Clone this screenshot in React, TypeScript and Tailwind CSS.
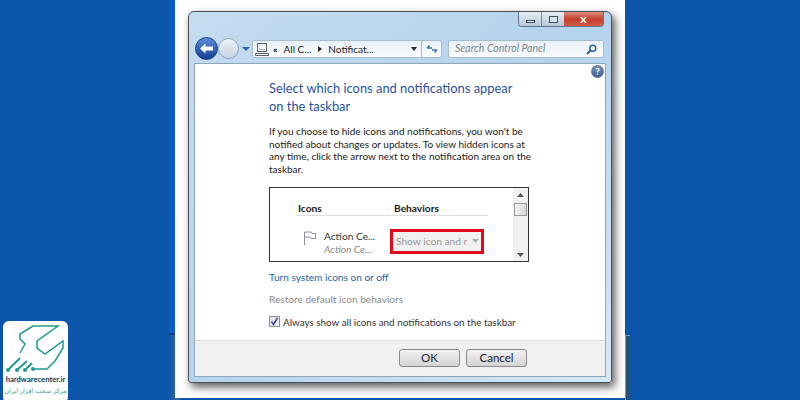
export default function App() {
  const font = { fontFamily: 'Lato, "Open Sans", sans-serif' };
  return (
    <div className="relative w-[800px] h-[400px] overflow-hidden bg-[#0b55ab] flex justify-center" style={font}>
      <div className="w-[462px] h-[400px] flex flex-col">
        <div className="h-[335px] bg-[#0a5cc4] w-[10px] border-b-2 border-[#0a3f80]" />
        <div className="flex-1 w-[10px] bg-gradient-to-r from-[#0b55ab] to-[#3a6e9c]" />
      </div>
      <div className="absolute left-[625px] top-[335px] w-[5px] h-[65px] bg-[#2a5070] border-l border-t border-[#7d97ad]" />
      <div className="absolute left-[175px] top-0 w-[450px] h-[398px] bg-white pt-[11px] pl-[13px]">
        <div className="w-[424px] h-[372px] rounded-t-[6px] rounded-b-[3px] border border-[#4a4f55] bg-gradient-to-br from-[#c5dcf0] via-[#b4d3ee] to-[#d6e8f6] shadow-[3px_4px_8px_rgba(0,0,0,0.65)] flex flex-col px-[5px] pb-[5px] relative">
          <div className="h-[51px] relative shrink-0">
            <div className="absolute right-[2px] top-0 flex h-[15px] rounded-b-[4px] border border-t-0 border-[#5f7488] overflow-hidden">
              <div className="w-[23px] bg-gradient-to-b from-[#e6eef6] to-[#b6c6d6] flex items-end justify-center pb-[3px] border-r border-[#7b8c9d]"><div className="w-[9px] h-[3px] bg-[#e8eef4] border border-[#44525f]" /></div>
              <div className="w-[22px] bg-gradient-to-b from-[#e6eef6] to-[#b6c6d6] flex items-center justify-center"><div className="w-[9px] h-[7px] border border-[#44525f] bg-[#d9e3ec]" /></div>
              <div className="w-[39px] bg-gradient-to-b from-[#dc8a7c] via-[#c4402c] to-[#cf5a45] flex items-center justify-center text-white text-[12px] font-bold leading-none">x</div>
            </div>
            <div className="absolute left-[1px] top-[25px] w-[23px] h-[23px] rounded-full border border-[#1b3f80] bg-gradient-to-b from-[#5e8ed8] to-[#113c94] flex items-center justify-center">
              <svg width="15" height="13" viewBox="0 0 15 13"><path d="M1 6.5 L6.5 1.5 V4.5 H14 V8.5 H6.5 V11.5 Z" fill="#fff" /></svg>
            </div>
            <div className="absolute left-[24px] top-[26px] w-[21px] h-[21px] rounded-full border border-[#8ca3ba] bg-gradient-to-b from-[#eef3f8] to-[#c6d5e3] flex items-center justify-center">
              <svg width="12" height="10" viewBox="0 0 15 13"><path d="M14 6.5 L8.5 1.5 V4.5 H1 V8.5 H8.5 V11.5 Z" fill="#d3dee8" /></svg>
            </div>
            <svg className="absolute left-[48px] top-[34px]" width="8" height="6" viewBox="0 0 8 6"><path d="M0 1 H8 L4 5 Z" fill="#2a66b0" /></svg>
            <div className="absolute left-[58px] top-[28px] w-[190px] h-[18px] bg-gradient-to-b from-[#e9f1f9] to-[#fafcfe] border border-[#a9bccc] rounded-[2px] flex items-center text-[10px] text-[#222] whitespace-nowrap">
              <svg className="ml-[2px] shrink-0" width="14" height="13" viewBox="0 0 14 13" fill="none" stroke="#56606a"><rect x="2.5" y="0.5" width="9" height="8" /><path d="M4 6.5 H10" stroke="#a0b8cc" /><path d="M0.5 10.5 H13.5 V12.5 H0.5 Z" /></svg>
              <span className="ml-[4px] text-[10px] font-bold leading-none">«</span>
              <span className="ml-[6px]">All C...</span>
              <svg className="ml-[7px] shrink-0" width="4" height="6" viewBox="0 0 4 6"><path d="M0 0 L4 3 L0 6 Z" fill="#222" /></svg>
              <span className="ml-[6px]">Notificat...</span>
              <svg className="ml-[37px] shrink-0" width="6" height="4" viewBox="0 0 6 4"><path d="M0 0 H6 L3 4 Z" fill="#222" /></svg>
              <div className="ml-auto w-[20px] h-full border-l border-[#a9bccc] flex items-center justify-center">
                <svg width="12" height="10" viewBox="0 0 12 10" fill="none" stroke="#3a6ea8" strokeWidth="1.4"><path d="M1 4 L3.5 1.5 M1 4 H6 M11 6 L8.5 8.5 M11 6 H6" /></svg>
              </div>
            </div>
            <div className="absolute left-[254px] top-[28px] w-[156px] h-[18px] bg-gradient-to-b from-[#e9f1f9] to-[#fafcfe] border border-[#a9bccc] rounded-[2px] flex items-center justify-between px-[6px] text-[10.5px] italic text-[#7c8791]">
              <span>Search Control Panel</span>
              <svg width="11" height="11" viewBox="0 0 11 11" fill="none" stroke="#2c66a8" strokeWidth="1.6"><circle cx="6.8" cy="4.2" r="3" /><path d="M4.6 6.4 L1 10" strokeWidth="2" /></svg>
            </div>
          </div>
          <div className="flex-1 bg-white border border-[#8fa5b8] flex flex-col">
            <div className="flex-1 relative pl-[74px] pt-[15px]">
              <div className="absolute right-[1px] top-[1px] w-[13px] h-[13px] rounded-full bg-gradient-to-b from-[#7e95b8] to-[#3a5c96] border border-[#5a7092] text-white text-[10px] font-bold leading-[11px] text-center">?</div>
              <div className="text-[12.9px] leading-[18px] text-[#2a52a0] w-[250px]">Select which icons and notifications appear on the taskbar</div>
              <div className="mt-[10px] text-[10px] leading-[12.7px] text-[#222] w-[266px]">If you choose to hide icons and notifications, you won't be notified about changes or updates. To view hidden icons at any time, click the arrow next to the notification area on the taskbar.</div>
              <div className="mt-[11px] w-[260px] h-[75px] border border-[#333] flex">
                <div className="flex-1 pl-[28px] pt-[14px]">
                  <div className="w-[190px] h-[14px] border-b border-[#ddd] flex text-[10.2px] font-bold leading-[12px] text-[#222]">
                    <span className="w-[96px]">Icons</span><span>Behaviors</span>
                  </div>
                  <div className="flex mt-[13px]">
                    <svg className="ml-[5px] mt-[2px] shrink-0" width="14" height="14" viewBox="0 0 14 14" fill="none" stroke="#8a9096"><path d="M1.5 14 V1 H8 L9 2.5 H13 L12 5 L13 7.5 H8 L7 6 H1.5" /></svg>
                    <div className="ml-[7px] pt-[1px] text-[10.2px] leading-[13px] text-[#333] w-[66px] whitespace-nowrap">Action Ce...<div className="italic text-[#888]">Action Ce...</div></div>
                    <div className="w-[94px] h-[25px] border-[3px] border-[#e00a1c] bg-[#f0f0f0] flex items-center pl-[3px] text-[10.2px] text-[#9a9a9a] whitespace-nowrap">
                      <span>Show icon and r</span>
                      <svg className="ml-[5px] shrink-0" width="7" height="4" viewBox="0 0 7 4"><path d="M0 0 H7 L3.5 4 Z" fill="#aaa" /></svg>
                    </div>
                  </div>
                </div>
                <div className="w-[15px] bg-[#f0f0f0] flex flex-col items-center pt-[5px] pb-[4px]">
                  <svg width="7" height="4" viewBox="0 0 7 4"><path d="M3.5 0 L7 4 H0 Z" fill="#555" /></svg>
                  <div className="mt-[6px] w-[13px] h-[13px] border border-[#999] bg-gradient-to-r from-[#f4f4f4] to-[#d8d8d8]" />
                  <svg className="mt-auto" width="7" height="4" viewBox="0 0 7 4"><path d="M0 0 H7 L3.5 4 Z" fill="#555" /></svg>
                </div>
              </div>
              <div className="mt-[8px] text-[10.1px] leading-[14px] text-[#1e63a8]">Turn system icons on or off</div>
              <div className="mt-[8px] text-[10.1px] leading-[14px] text-[#8c8c8c]">Restore default icon behaviors</div>
              <div className="mt-[9px] flex items-center text-[9.9px] leading-[14px] text-[#333]">
                <div className="w-[11px] h-[11px] border border-[#8e8f8f] bg-gradient-to-br from-[#dcdcdc] to-[#fafafa] flex items-center justify-center">
                  <svg width="9" height="9" viewBox="0 0 9 9" fill="none" stroke="#3c3fa0" strokeWidth="1.5"><path d="M1.5 4.5 L3.5 7.5 L7.5 1" /></svg>
                </div>
                <span className="ml-[3px]">Always show all icons and notifications on the taskbar</span>
              </div>
            </div>
            <div className="h-[36px] bg-[#f0f0f0] border-t border-[#dfdfdf] flex items-start justify-end gap-[6px] pt-[8px] pr-[78px] text-[11.5px] text-[#222]">
              <div className="w-[61px] h-[18px] rounded-[3px] border border-[#8a8a8a] bg-gradient-to-b from-[#f2f2f2] to-[#d4d4d4] flex items-center justify-center">OK</div>
              <div className="w-[61px] h-[18px] rounded-[3px] border border-[#8a8a8a] bg-gradient-to-b from-[#f2f2f2] to-[#d4d4d4] flex items-center justify-center">Cancel</div>
            </div>
          </div>
        </div>
      </div>
      <div className="absolute left-[3px] top-[321px] w-[65px] h-[82px] rounded-[6px] bg-white flex flex-col items-center">
        <svg className="mt-[1px] shrink-0" width="65" height="52" viewBox="0 0 65 52" fill="none" stroke="#1e9c94" strokeWidth="1.5">
          <path d="M17 31 L22 22 L17 17 V12 L30 4 H55 L34 19 V26 L42 32 L60 19 V26 L52 39 L44 47 H30" />
          <circle cx="5" cy="48" r="2" fill="#1e9c94" stroke="none" />
          <circle cx="14" cy="48" r="2" fill="#1e9c94" stroke="none" />
          <circle cx="22" cy="48" r="2" fill="#1e9c94" stroke="none" />
          <circle cx="30" cy="47" r="2" fill="#1e9c94" stroke="none" />
          <path d="M5 48 L17 36 M14 48 L24 39 M22 48 L29 41" strokeWidth="2" />
        </svg>
        <div className="text-[7.6px] leading-[10px] font-bold text-[#123a50] whitespace-nowrap">hardwarecenter.ir</div>
        <div className="text-[6.4px] leading-[12px] mt-[1px] text-[#3a9c96] whitespace-nowrap" dir="rtl" style={{ fontFamily: '"DejaVu Sans", sans-serif' }}>مرکز سخت افزار ایران</div>
      </div>
    </div>
  );
}
